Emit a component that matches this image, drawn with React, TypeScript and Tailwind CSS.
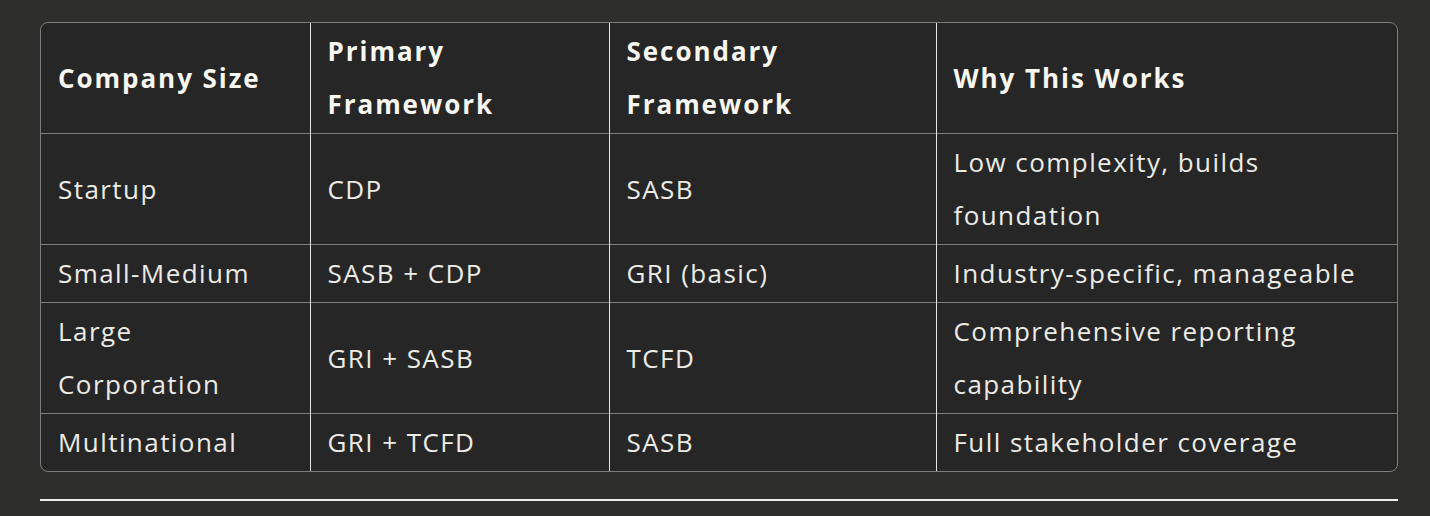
import React from 'react'

const rows = [
  ['Startup', 'CDP', 'SASB', 'Low complexity, builds foundation'],
  ['Small-Medium', 'SASB + CDP', 'GRI (basic)', 'Industry-specific, manageable'],
  ['Large Corporation', 'GRI + SASB', 'TCFD', 'Comprehensive reporting capability'],
  ['Multinational', 'GRI + TCFD', 'SASB', 'Full stakeholder coverage'],
]

const headers = ['Company Size', 'Primary Framework', 'Secondary Framework', 'Why This Works']

export default function App() {
  return (
    <div
      className="min-h-[516px] bg-[#2e2e2d] px-[40px] pt-[22px] text-[26px] leading-[53px] tracking-[0.055em] text-[#ecebe6]"
      style={{ fontFamily: '"Open Sans", sans-serif' }}
    >
      <div className="w-[1358px] overflow-hidden rounded-lg border border-[#7d7d7d] bg-[#262626]">
        <table className="w-full table-fixed border-collapse">
          <colgroup>
            <col className="w-[269px]" />
            <col className="w-[299px]" />
            <col className="w-[327px]" />
            <col />
          </colgroup>
          <thead>
            <tr>
              {headers.map((h, i) => (
                <th
                  key={h}
                  className={`px-[17px] py-[2px] text-left font-bold tracking-[0.075em] text-[#f7f6f1] ${
                    i > 0 ? 'border-l border-[#e4e4e4]' : ''
                  }`}
                >
                  {h}
                </th>
              ))}
            </tr>
          </thead>
          <tbody>
            {rows.map((row) => (
              <tr key={row[0]} className="border-t border-[#7d7d7d]">
                {row.map((cell, i) => (
                  <td
                    key={i}
                    className={`px-[17px] py-[2px] align-middle ${
                      i > 0 ? 'border-l border-[#e4e4e4]' : ''
                    }`}
                  >
                    {cell}
                  </td>
                ))}
              </tr>
            ))}
          </tbody>
        </table>
      </div>
      <div className="mt-[27px] h-[2px] w-[1358px] bg-[#ececec]" />
    </div>
  )
}
